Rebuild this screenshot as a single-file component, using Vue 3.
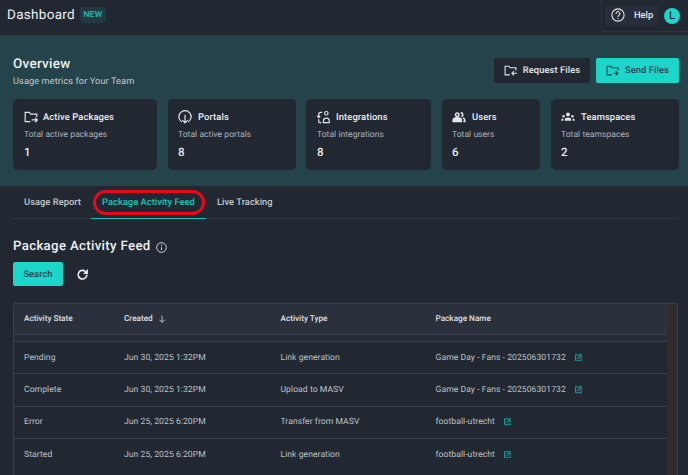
<script setup>
const cards = [
  { key: 'packages', title: 'Active Packages', sub: 'Total active packages', value: '1', cls: 'c1' },
  { key: 'portals', title: 'Portals', sub: 'Total active portals', value: '8', cls: 'c2' },
  { key: 'integrations', title: 'Integrations', sub: 'Total integrations', value: '8', cls: 'c3' },
  { key: 'users', title: 'Users', sub: 'Total users', value: '6', cls: 'c4' },
  { key: 'teams', title: 'Teamspaces', sub: 'Total teamspaces', value: '2', cls: 'c5' },
]
const rows = [
  ['Pending', 'Jun 30, 2025 1:32PM', 'Link generation', 'Game Day - Fans - 202506301732'],
  ['Complete', 'Jun 30, 2025 1:32PM', 'Upload to MASV', 'Game Day - Fans - 202506301732'],
  ['Error', 'Jun 25, 2025 6:20PM', 'Transfer from MASV', 'football-utrecht'],
  ['Started', 'Jun 25, 2025 6:20PM', 'Link generation', 'football-utrecht'],
]
</script>

<template>
  <div class="page">
    <header class="top">
      <div class="brand">
        <span class="brand-title">Dashboard</span>
        <span class="badge">NEW</span>
      </div>
      <div class="top-right">
        <div class="help">
          <svg class="help-ic" viewBox="0 0 24 24" fill="none" stroke="currentColor" stroke-width="1.800">
            <circle cx="12" cy="12" r="10.500" />
            <path d="M8.800 9.400a3.200 3.200 0 1 1 4.900 2.700c-1 .7-1.700 1.300-1.700 2.600" stroke-linecap="round" />
            <circle cx="12" cy="17.600" r="1.100" fill="currentColor" stroke="none" />
          </svg>
          <span>Help</span>
        </div>
        <span class="avatar">L</span>
      </div>
    </header>

    <section class="band">
      <div class="band-head">
        <div>
          <h1 class="ov-title">Overview</h1>
          <p class="ov-sub">Usage metrics for Your Team</p>
        </div>
        <div class="actions">
          <button class="btn dark">
            <svg class="btn-ic" viewBox="0 0 24 24" fill="none" stroke="currentColor" stroke-width="2">
              <path d="M11 20H2V4h7l2.500 3H22v5" />
              <path d="M24 17h-9M18.500 13 14.500 17l4 4" />
            </svg>
            Request Files
          </button>
          <button class="btn teal">
            <svg class="btn-ic" viewBox="0 0 24 24" fill="none" stroke="currentColor" stroke-width="2">
              <path d="M11 20H2V4h7l2.500 3H22v5" />
              <path d="M13 17h9M18 13l4 4-4 4" />
            </svg>
            Send Files
          </button>
        </div>
      </div>
      <div class="cards">
        <div v-for="c in cards" :key="c.key" class="card" :class="c.cls">
          <div class="card-title">
            <svg v-if="c.key === 'packages'" class="card-ic" viewBox="0 0 24 24" fill="none" stroke="currentColor" stroke-width="2">
              <path d="M11 20H2V4h7l2.500 3H22v5" />
              <path d="M13 17h10M19 13l4 4-4 4" />
            </svg>
            <svg v-else-if="c.key === 'portals'" class="card-ic" viewBox="0 0 24 24" fill="none" stroke="currentColor" stroke-width="2">
              <path d="M6.500 20.500A10.500 10.500 0 1 1 17.500 20.500" />
              <path d="M12 8v14M7.500 17.500 12 22l4.500-4.500" />
            </svg>
            <svg v-else-if="c.key === 'integrations'" class="card-ic" viewBox="0 0 24 24" fill="none" stroke="currentColor" stroke-width="2">
              <circle cx="16" cy="5.500" r="3" />
              <path d="M11 21.500v-3.500c0-2.500 2-4 5-4s5 1.500 5 4v3.500z" />
              <path d="M9 4H6.500a3.500 3.500 0 0 0-3.500 3.500V13M.5 10 3 13l2.500-3M7.500 21.500H5a2 2 0 0 1-2-2V16" />
            </svg>
            <svg v-else-if="c.key === 'users'" class="card-ic" viewBox="0 0 24 24" fill="none" stroke="currentColor" stroke-width="2.600">
              <circle cx="9" cy="8" r="3" />
              <path d="M2 19.500v-2c0-2.600 3-4 7-4s7 1.400 7 4v2z" fill="currentColor" />
              <path d="M15 5a3 3 0 0 1 1 6M18.500 13.700c2.200.6 3.500 1.900 3.500 3.800v2h-2.500" />
            </svg>
            <svg v-else class="card-ic" viewBox="0 0 24 24" fill="currentColor">
              <circle cx="12" cy="7.500" r="3.300" />
              <path d="M6.500 18.500v-2c0-2 2.500-3.500 5.500-3.500s5.500 1.500 5.500 3.500v2z" />
              <circle cx="4.500" cy="10.500" r="2.100" />
              <circle cx="19.500" cy="10.500" r="2.100" />
              <path d="M.5 18.500V17c0-1.500 1.500-2.500 4-2.500-.3.7-.5 1.300-.5 2v2zM23.500 18.500V17c0-1.500-1.500-2.500-4-2.500.3.7.5 1.300.5 2v2z" />
            </svg>
            <span>{{ c.title }}</span>
          </div>
          <div class="card-sub">{{ c.sub }}</div>
          <div class="card-val">{{ c.value }}</div>
        </div>
      </div>
    </section>

    <nav class="tabs">
      <span class="tab">Usage Report</span>
      <span class="tab active">
        Package Activity Feed
        <span class="ring"></span>
      </span>
      <span class="tab">Live Tracking</span>
    </nav>

    <section class="feed">
      <h2 class="feed-title">
        Package Activity Feed
        <svg class="info" viewBox="0 0 24 24" fill="none" stroke="currentColor" stroke-width="2">
          <circle cx="12" cy="12" r="10.500" />
          <path d="M12 11v6.500" />
          <circle cx="12" cy="7.500" r="1.400" fill="currentColor" stroke="none" />
        </svg>
      </h2>
      <div class="feed-actions">
        <button class="search">Search</button>
        <svg class="refresh" viewBox="0 0 24 24" fill="none" stroke="currentColor" stroke-width="3">
          <path d="M20 12.500a8 8 0 1 1-2.500-6" />
          <path d="M22 2v9h-9z" fill="currentColor" stroke="none" />
        </svg>
      </div>

      <div class="table">
        <div class="table-main">
          <div class="thead row">
            <span>Activity State</span>
            <span class="sorted">
              Created
              <svg class="arrow" viewBox="0 0 12 12" fill="none" stroke="currentColor" stroke-width="1.200">
                <path d="M6 1v10M2 7l4 4 4-4" />
              </svg>
            </span>
            <span>Activity Type</span>
            <span>Package Name</span>
          </div>
          <div class="spacer"></div>
          <div v-for="(r, i) in rows" :key="i" class="tbody row">
            <span>{{ r[0] }}</span>
            <span>{{ r[1] }}</span>
            <span>{{ r[2] }}</span>
            <span class="pkg">
              {{ r[3] }}
              <svg class="ext" viewBox="0 0 12 12" fill="none" stroke="currentColor" stroke-width="1.500">
                <path d="M.8 1.200h10.400v9.600H.8z" fill="currentColor" fill-opacity="0.18" />
                <path d="M6.500 3.200h2.300v2.300M8.800 3.200 4 8" />
              </svg>
            </span>
          </div>
        </div>
        <div class="scrollbar"></div>
      </div>
    </section>
  </div>
</template>

<style scoped>
.page {
  width: 688px;
  height: 475px;
  overflow: hidden;
  background: #212832;
  color: #fff;
  font-family: Roboto, "Liberation Sans", sans-serif;
  text-rendering: geometricPrecision;
}
.top {
  height: 36px;
  box-sizing: border-box;
  display: flex;
  justify-content: space-between;
  align-items: flex-start;
  border-bottom: 1px solid #2b3640;
}
.brand {
  display: flex;
  align-items: center;
  gap: 5px;
  height: 30px;
  padding-left: 7px;
}
.brand-title {
  font-size: 13.500px;
  letter-spacing: 0.3px;
  color: #edeff1;
}
.badge {
  width: 26px;
  height: 16px;
  line-height: 16px;
  text-align: center;
  font-size: 8.500px;
  font-weight: 500;
  letter-spacing: 0.2px;
  border-radius: 3px;
  background: #243a42;
  color: #1cc0b4;
}
.top-right {
  width: 87px;
  height: 32px;
  box-sizing: border-box;
  border-left: 1px solid #2c333d;
  border-bottom: 1px solid #2c333d;
  border-bottom-left-radius: 2px;
  display: flex;
  align-items: center;
  gap: 5px;
  padding: 0 8px 0 3px;
}
.help {
  width: 54px;
  height: 21px;
  margin-bottom: 1px;
  border-radius: 3px;
  background: #272e39;
  display: flex;
  align-items: center;
  gap: 9px;
  padding-left: 6px;
  box-sizing: border-box;
  font-size: 9.300px;
  font-weight: 500;
  color: #e6e8ea;
}
.help-ic {
  width: 14px;
  height: 14px;
  flex: none;
  color: #e8eaec;
}
.avatar {
  width: 16px;
  height: 16px;
  border-radius: 50%;
  background: #1bd5c8;
  color: #212832;
  font-size: 11px;
  font-weight: 500;
  line-height: 16px;
  text-align: center;
}
.band {
  height: 150px;
  box-sizing: border-box;
  background: #24434b;
  padding: 0 9px 0 13px;
}
.band-head {
  height: 63px;
  display: flex;
  justify-content: space-between;
  align-items: flex-start;
}
.ov-title {
  margin: 20px 0 0;
  font-size: 13.500px;
  line-height: 16px;
  font-weight: 500;
  letter-spacing: 0.25px;
  color: #eef0f1;
}
.ov-sub {
  margin: 4px 0 0;
  font-size: 9.200px;
  line-height: 12px;
  letter-spacing: 0.1px;
  color: #c6ccd0;
}
.actions {
  display: flex;
  gap: 6px;
  margin-top: 22px;
}
.btn {
  height: 25px;
  border: 0;
  border-radius: 2px;
  padding: 0;
  display: flex;
  align-items: center;
  justify-content: center;
  gap: 6px;
  font: 500 9.300px Roboto, sans-serif;
  letter-spacing: 0.1px;
  text-rendering: geometricPrecision;
}
.btn.dark {
  width: 96px;
  background: #212832;
  color: #e4e6e8;
}
.btn.teal {
  width: 83px;
  background: #1bd6c9;
  color: #24444b;
}
.btn-ic {
  width: 13px;
  height: 13px;
  flex: none;
}
.cards {
  display: flex;
  gap: 11px;
}
.card {
  box-sizing: border-box;
  height: 71px;
  border-radius: 5px;
  background: #212832;
  padding: 11px 10px 0;
  flex: none;
}
.c1 { width: 144px; padding-left: 11px; }
.c2 { width: 128px; }
.c3 { width: 125px; padding-left: 11px; margin-left: -1px; }
.c4 { width: 98px; }
.c5 { width: 128px; }
.card-title {
  display: flex;
  align-items: center;
  gap: 5px;
  height: 14px;
  font-size: 9.400px;
  font-weight: 500;
  letter-spacing: 0.1px;
  color: #eceef0;
}
.c2 .card-title,
.c4 .card-title,
.c5 .card-title {
  gap: 6px;
}
.card-ic {
  width: 14px;
  height: 14px;
  flex: none;
  color: #e4e6e8;
}
.card-sub {
  margin-top: 5px;
  font-size: 8.500px;
  line-height: 12px;
  letter-spacing: 0.05px;
  color: #b0b5ba;
}
.card-val {
  margin-top: 4px;
  font-size: 11.500px;
  line-height: 14px;
  font-weight: 500;
  color: #eceef0;
}
.tabs {
  height: 33px;
  box-sizing: border-box;
  margin: 0 11px 0 13px;
  border-bottom: 1px solid #2f3640;
  display: flex;
  padding-top: 1px;
}
.tab {
  position: relative;
  height: 32px;
  box-sizing: border-box;
  padding: 0 11px;
  line-height: 31px;
  font-size: 9.300px;
  font-weight: 500;
  letter-spacing: 0.05px;
  color: #c4c8cc;
  white-space: nowrap;
}
.tab.active {
  color: #1cc4b8;
  border-bottom: 1.500px solid #1cc4b8;
  width: 115px;
}
.tab:first-child {
  width: 78px;
}
.ring {
  position: absolute;
  left: 2px;
  top: 3px;
  width: 112px;
  height: 25px;
  box-sizing: border-box;
  border: 3px solid #e8081a;
  border-radius: 13px;
}
.feed {
  padding: 0 10px 0 13px;
}
.feed-title {
  margin: 19px 0 0;
  font-size: 13.200px;
  line-height: 18px;
  font-weight: 500;
  letter-spacing: 0.35px;
  color: #eef0f1;
  display: flex;
  align-items: center;
  gap: 5px;
}
.info {
  width: 11px;
  height: 11px;
  margin-top: 1px;
  color: #e4e6e8;
}
.feed-actions {
  margin-top: 6px;
  display: flex;
  align-items: center;
  gap: 13px;
}
.search {
  width: 50px;
  height: 24px;
  border: 0;
  border-radius: 2px;
  background: #1bd6c9;
  color: #24444b;
  font: 500 9.200px Roboto, sans-serif;
  letter-spacing: 0.1px;
  text-rendering: geometricPrecision;
}
.refresh {
  width: 13px;
  height: 13px;
  color: #eceef0;
}
.table {
  margin-top: 17px;
  height: 175px;
  border: 1px solid #3a414c;
  border-bottom: 0;
  border-radius: 3px 3px 0 0;
  display: flex;
  overflow: hidden;
}
.table-main {
  flex: 1;
  min-width: 0;
}
.scrollbar {
  width: 10px;
  background: #2d2d2d;
}
.row {
  display: grid;
  grid-template-columns: 100px 156.500px 155px 1fr;
  align-items: center;
  padding-left: 10px;
}
.thead {
  height: 31px;
  box-sizing: border-box;
  background: #2a303c;
  border-bottom: 1px solid #3a414c;
  font-size: 8.200px;
  font-weight: 500;
  color: #dfe1e4;
}
.sorted {
  display: flex;
  align-items: center;
  gap: 5px;
}
.arrow {
  width: 8px;
  height: 8px;
}
.spacer {
  height: 6px;
  background: #262c37;
}
.tbody {
  height: 32.300px;
  box-sizing: border-box;
  border-top: 1px solid #3a414c;
  font-size: 8.600px;
  letter-spacing: 0.05px;
  color: #bec2c7;
}
.pkg {
  display: flex;
  align-items: center;
  gap: 9px;
}
.ext {
  width: 7.500px;
  height: 7.500px;
  color: #1a9f97;
  flex: none;
}
</style>
